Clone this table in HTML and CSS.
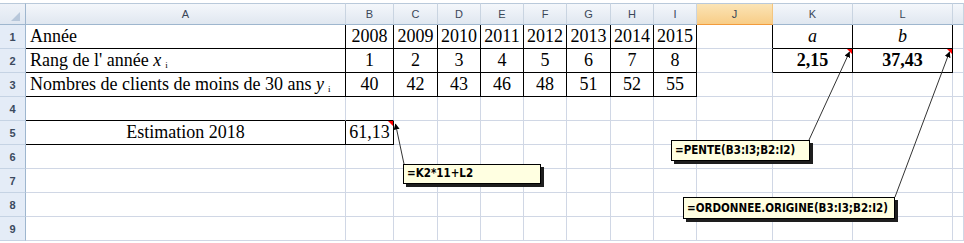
FILE: index.html
```html
<!DOCTYPE html>
<html lang="fr">
<head>
<meta charset="utf-8">
<title>Feuil1</title>
<link rel="stylesheet" href="styles.css">
</head>
<body>
<div class="sheet">
  <!-- header row -->
  <div class="hd corner"><svg width="25" height="21" viewBox="0 0 25 21"><polygon points="20,8 20,17 11,17" fill="#b7c7da"/></svg></div>
  <div class="hd">A</div><div class="hd">B</div><div class="hd">C</div><div class="hd">D</div><div class="hd">E</div><div class="hd">F</div><div class="hd">G</div><div class="hd">H</div><div class="hd">I</div><div class="hd sel">J</div><div class="hd">K</div><div class="hd">L</div><div class="hd"></div>

  <!-- row 1 -->
  <div class="rh">1</div>
  <div class="c lft br bb">Année</div>
  <div class="c ctr br bb">2008</div><div class="c ctr br bb">2009</div><div class="c ctr br bb">2010</div><div class="c ctr br bb">2011</div><div class="c ctr br bb">2012</div><div class="c ctr br bb">2013</div><div class="c ctr br bb">2014</div><div class="c ctr br bb">2015</div>
  <div class="c br"></div>
  <div class="c ctr br bb"><i>a</i></div><div class="c ctr br bb"><i>b</i></div><div class="c"></div>

  <!-- row 2 -->
  <div class="rh">2</div>
  <div class="c lft br bb">Rang de l' année <i>x</i><span class="sub">i</span></div>
  <div class="c ctr br bb">1</div><div class="c ctr br bb">2</div><div class="c ctr br bb">3</div><div class="c ctr br bb">4</div><div class="c ctr br bb">5</div><div class="c ctr br bb">6</div><div class="c ctr br bb">7</div><div class="c ctr br bb">8</div>
  <div class="c br"></div>
  <div class="c ctr br bb strong flag">2,15</div><div class="c ctr br bb strong flag">37,43</div><div class="c"></div>

  <!-- row 3 -->
  <div class="rh">3</div>
  <div class="c lft br bb">Nombres de clients de moins de 30 ans <i>y</i><span class="sub">i</span></div>
  <div class="c ctr br bb">40</div><div class="c ctr br bb">42</div><div class="c ctr br bb">43</div><div class="c ctr br bb">46</div><div class="c ctr br bb">48</div><div class="c ctr br bb">51</div><div class="c ctr br bb">52</div><div class="c ctr br bb">55</div>
  <div class="c"></div><div class="c"></div><div class="c"></div><div class="c"></div>

  <!-- row 4 -->
  <div class="rh">4</div>
  <div class="c bb"></div><div class="c bb"></div>
  <div class="c"></div><div class="c"></div><div class="c"></div><div class="c"></div><div class="c"></div><div class="c"></div><div class="c"></div><div class="c"></div><div class="c"></div><div class="c"></div><div class="c"></div>

  <!-- row 5 -->
  <div class="rh">5</div>
  <div class="c ctr br bb">Estimation 2018</div><div class="c ctr br bb flag">61,13</div>
  <div class="c"></div><div class="c"></div><div class="c"></div><div class="c"></div><div class="c"></div><div class="c"></div><div class="c"></div><div class="c"></div><div class="c"></div><div class="c"></div><div class="c"></div>

  <!-- row 6 -->
  <div class="rh">6</div>
  <div class="c"></div><div class="c"></div><div class="c"></div><div class="c"></div><div class="c"></div><div class="c"></div><div class="c"></div><div class="c"></div><div class="c"></div><div class="c"></div><div class="c"></div><div class="c"></div><div class="c"></div>

  <!-- row 7 -->
  <div class="rh">7</div>
  <div class="c"></div><div class="c"></div><div class="c"></div><div class="c"></div><div class="c"></div><div class="c"></div><div class="c"></div><div class="c"></div><div class="c"></div><div class="c"></div><div class="c"></div><div class="c"></div><div class="c"></div>

  <!-- row 8 -->
  <div class="rh">8</div>
  <div class="c"></div><div class="c"></div><div class="c"></div><div class="c"></div><div class="c"></div><div class="c"></div><div class="c"></div><div class="c"></div><div class="c"></div><div class="c"></div><div class="c"></div><div class="c"></div><div class="c"></div>

  <!-- row 9 -->
  <div class="rh">9</div>
  <div class="c"></div><div class="c"></div><div class="c"></div><div class="c"></div><div class="c"></div><div class="c"></div><div class="c"></div><div class="c"></div><div class="c"></div><div class="c"></div><div class="c"></div><div class="c"></div><div class="c"></div>
</div>

<svg class="wires" width="964" height="243" viewBox="0 0 964 243">
  <defs>
    <marker id="ah" viewBox="0 0 10 10" refX="9" refY="5" markerWidth="6" markerHeight="6" orient="auto">
      <path d="M0,0 L10,5 L0,10 z" fill="#000"/>
    </marker>
  </defs>
  <line x1="404" y1="164" x2="395.5" y2="124" stroke="#333" stroke-width="1" marker-end="url(#ah)"/>
  <line x1="809" y1="140" x2="849.5" y2="52" stroke="#333" stroke-width="1" marker-end="url(#ah)"/>
  <line x1="895" y1="197" x2="949.5" y2="52" stroke="#333" stroke-width="1" marker-end="url(#ah)"/>
</svg>

<div class="note note-k">=K2*11+L2</div>
<div class="note note-pente">=PENTE(B3:I3;B2:I2)</div>
<div class="note note-ord">=ORDONNEE.ORIGINE(B3:I3;B2:I2)</div>
</body>
</html>
```

FILE: styles.css
```css
html, body {
  margin: 0;
  padding: 0;
  background: #fff;
}
body {
  width: 964px;
  height: 243px;
  overflow: hidden;
  position: relative;
}
.sheet {
  display: grid;
  grid-template-columns: 26px 320px 48px 44px 43px 43px 43px 44px 43px 43px 76px 80px 100px 11px;
  grid-template-rows: 22px repeat(9, 24px);
  padding-top: 3px;
}
.hd {
  box-sizing: border-box;
  background: linear-gradient(#f4f7fb, #e0e7f0);
  border-top: 1px solid #b9c9da;
  border-right: 1px solid #c9d4e1;
  border-bottom: 1px solid #9eb6ce;
  font: 11px "Liberation Sans", Arial, sans-serif;
  color: #3a4657;
  text-align: center;
  line-height: 20px;
}
.hd.corner {
  border-right: 1px solid #9eb6ce;
  background: linear-gradient(#eef2f8, #dfe7f1);
}
.hd.corner svg {
  display: block;
}
.hd.sel {
  background: linear-gradient(#fbe4b6, #f8cd87);
  border-bottom: 1px solid #f29b3c;
  border-right: 1px solid #f3c57f;
}
.rh {
  box-sizing: border-box;
  background: #e4ecf7;
  border-right: 1px solid #9eb6ce;
  border-bottom: 1px solid #c5d3e4;
  font: bold 11px "Liberation Sans", Arial, sans-serif;
  color: #3b4a5e;
  text-align: center;
  line-height: 25px;
}
.c {
  box-sizing: border-box;
  position: relative;
  border-right: 1px solid #d0d7e5;
  border-bottom: 1px solid #d0d7e5;
  font: 18px "Liberation Serif", "Times New Roman", serif;
  color: #000;
  line-height: 23px;
  white-space: nowrap;
}
.c.br {
  border-right-color: #000;
}
.c.bb {
  border-bottom-color: #000;
}
.ctr {
  text-align: center;
}
.lft {
  padding-left: 4px;
}
.strong {
  font-weight: bold;
}
.sub {
  font-size: 9px;
  margin-left: 4px;
  vertical-align: -2px;
}
.flag::after {
  content: "";
  position: absolute;
  top: 0;
  right: 0;
  width: 0;
  height: 0;
  border-left: 5px solid transparent;
  border-top: 5px solid #ff0000;
}
.wires {
  position: absolute;
  left: 0;
  top: 0;
}
.note {
  position: absolute;
  box-sizing: border-box;
  background: #ffffe1;
  border: 1px solid #000;
  box-shadow: 3px 3px 0 #1e1e1e;
  font-family: "DejaVu Sans Condensed", "DejaVu Sans", Verdana, sans-serif;
  font-weight: bold;
  font-stretch: condensed;
  font-size: 11.5px;
  color: #000;
  padding: 0 3px;
  white-space: nowrap;
}
.note-k {
  left: 403px;
  top: 164px;
  width: 138px;
  height: 20px;
  line-height: 17px;
}
.note-pente {
  left: 671px;
  top: 140px;
  width: 139px;
  height: 21px;
  line-height: 18px;
}
.note-ord {
  left: 683px;
  top: 197px;
  width: 212px;
  height: 22px;
  line-height: 20px;
}
```
